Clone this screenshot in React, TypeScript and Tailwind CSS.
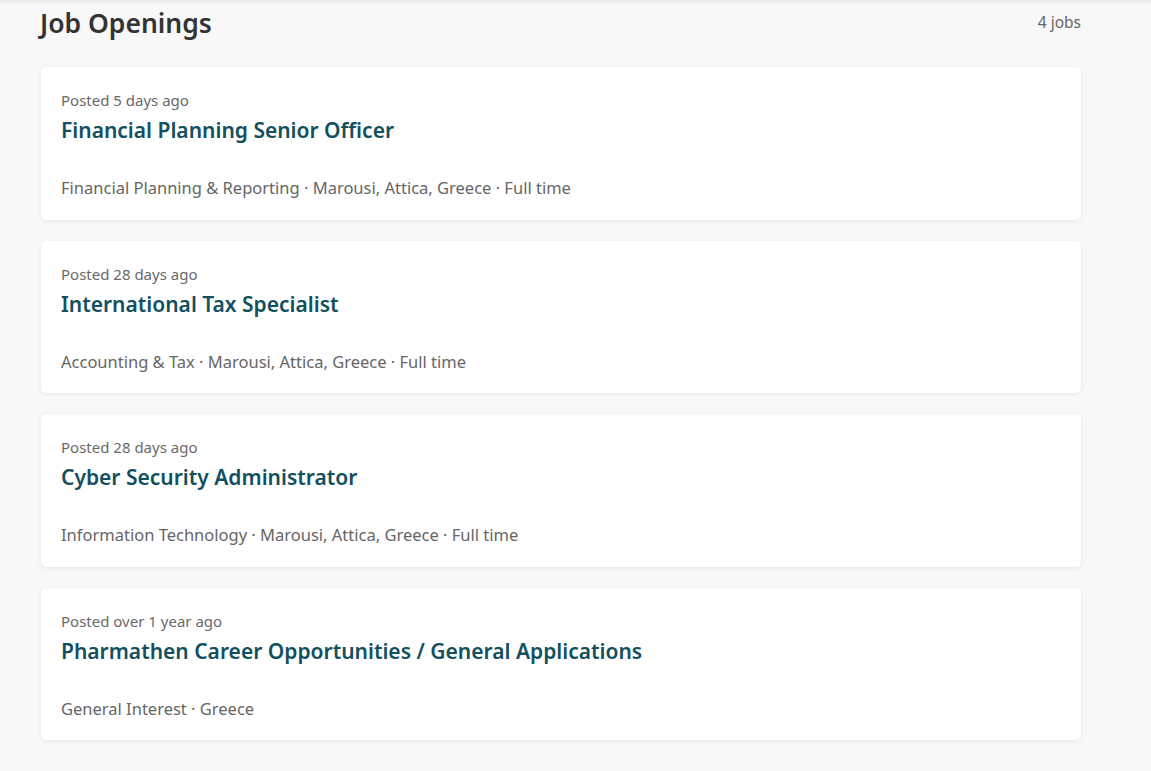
const jobs = [
  {
    posted: "Posted 5 days ago",
    title: "Financial Planning Senior Officer",
    meta: "Financial Planning & Reporting · Marousi, Attica, Greece · Full time",
  },
  {
    posted: "Posted 28 days ago",
    title: "International Tax Specialist",
    meta: "Accounting & Tax · Marousi, Attica, Greece · Full time",
  },
  {
    posted: "Posted 28 days ago",
    title: "Cyber Security Administrator",
    meta: "Information Technology · Marousi, Attica, Greece · Full time",
  },
  {
    posted: "Posted over 1 year ago",
    title: "Pharmathen Career Opportunities / General Applications",
    meta: "General Interest · Greece",
  },
];

function JobCard({ posted, title, meta }: { posted: string; title: string; meta: string }) {
  return (
    <a
      href="#"
      className="block bg-white rounded-[5px] shadow-[0_1px_4px_rgba(0,0,0,0.08)] pl-5 pr-5 pt-[23px] pb-[19.5px]"
    >
      <div className="text-[15px] leading-5 text-[#6a6a6a]">{posted}</div>
      <div className="text-[21px] leading-7 font-semibold text-[#13505f] mt-[6px]">{title}</div>
      <div className="text-[16.5px] leading-6 text-[#666666] mt-8">{meta}</div>
    </a>
  );
}

export default function App() {
  return (
    <div
      className="min-h-screen bg-[#f8f8f8] shadow-[inset_0_6px_6px_-6px_rgba(0,0,0,0.12)]"
      style={{ fontFamily: '"Noto Sans", "Open Sans", sans-serif' }}
    >
      <div className="w-[1041px] ml-10 pb-8">
        <div className="flex items-center justify-between h-[46px]">
          <h1 className="text-[26.5px] font-semibold text-[#333333] leading-8">Job Openings</h1>
          <span className="text-[15.5px] text-[#666666]">4 jobs</span>
        </div>
        <div className="mt-[21px] flex flex-col gap-[21px] pl-px">
          {jobs.map((j) => (
            <JobCard key={j.title} {...j} />
          ))}
        </div>
      </div>
    </div>
  );
}
